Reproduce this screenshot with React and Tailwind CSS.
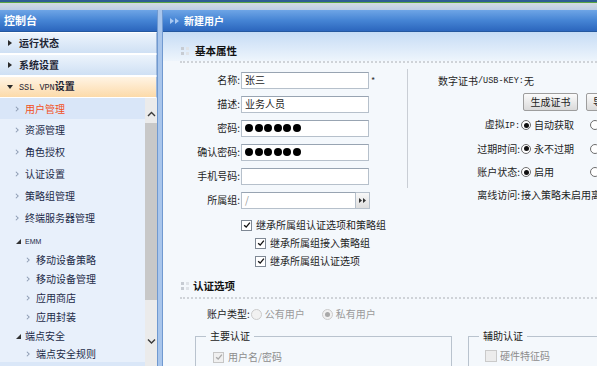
import React from "react";

const mono = "font-['Liberation_Mono',monospace]";

function Chevron({ dir = "right", className = "" }) {
  const d = {
    right: "M1 1 L4 4 L1 7",
    up: "M1 5 L4.5 1.5 L8 5",
    down: "M1 1.5 L4.5 5 L8 1.5",
  }[dir];
  const box = dir === "right" ? "0 0 5 8" : "0 0 9 6";
  return (
    <svg viewBox={box} className={className}>
      <path d={d} fill="none" stroke="currentColor" strokeWidth="1.4" />
    </svg>
  );
}

function Check({ checked, disabled, big }) {
  const box = disabled
    ? big
      ? "w-[12px] h-[12px] border border-[#cacaca] bg-[#ececec] flex items-center justify-center shrink-0"
      : "w-[11px] h-[11px] border border-[#c6c6c6] bg-[#f0f0f0] flex items-center justify-center shrink-0"
    : "w-[11px] h-[11px] border border-[#7e8894] bg-white flex items-center justify-center shrink-0";
  return (
    <span className={box}>
      {checked && (
        <svg viewBox="0 0 10 10" className="w-[8px] h-[8px]">
          <path d="M1.4 5.2 L4 7.6 L8.6 2" fill="none" stroke={disabled ? "#a9a9a9" : "#141414"} strokeWidth="1.7" />
        </svg>
      )}
    </span>
  );
}

function Radio({ checked, disabled }) {
  return (
    <span
      className={
        disabled
          ? "w-[11px] h-[11px] rounded-full border border-[#cbcbcb] bg-[#f1f1f1] flex items-center justify-center shrink-0"
          : "w-[10px] h-[10px] rounded-full border border-[#6d6d6d] bg-white flex items-center justify-center shrink-0"
      }
    >
      {checked && <span className={disabled ? "w-[5px] h-[5px] rounded-full bg-[#a8a8a8]" : "w-[5px] h-[5px] rounded-full bg-[#111]"} />}
    </span>
  );
}

function Field({ label, children, star, h = "h-[24px]" }) {
  return (
    <div className={`flex items-center ${h}`}>
      <span className="w-[77px] shrink-0 text-right whitespace-nowrap">{label}</span>
      {children}
      {star && <span className="ml-[2px] text-[9px] text-[#333]">*</span>}
    </div>
  );
}

function Input({ children, className = "w-[128px] ml-[1px]" }) {
  return (
    <div className={`h-[17px] shrink-0 border border-[#b6c0cb] border-t-[#98a4b2] bg-white flex items-center px-[3px] ${className}`}>
      {children}
    </div>
  );
}

function Dots() {
  return (
    <div className="flex gap-[1.5px]">
      {[0, 1, 2, 3, 4, 5].map((i) => (
        <span key={i} className="w-[8px] h-[8px] rounded-full bg-black" />
      ))}
    </div>
  );
}

function Grip() {
  return (
    <div className="grid grid-cols-2 gap-[2px] w-[8px]">
      <span className="w-[3px] h-[3px] bg-[#c7ccd3]" />
      <span className="w-[3px] h-[3px] bg-[#dfe3e8]" />
      <span className="w-[3px] h-[3px] bg-[#c7ccd3]" />
      <span className="w-[3px] h-[3px] bg-[#dfe3e8]" />
    </div>
  );
}

function TopItem({ children, open }) {
  return (
    <div
      className={
        open
          ? "h-[22px] flex items-center pl-[7px] bg-gradient-to-b from-[#fff4e4] to-[#fcdaa9] border-t border-white border-b border-[#e3bd86] border-r border-r-[#9fb9dc]"
          : "h-[22px] flex items-center pl-[8px] bg-gradient-to-b from-[#edf4fc] to-[#cfe0f4] border-t border-white border-b border-[#9ebadc] border-r border-r-[#9fb9dc]"
      }
    >
      {open ? (
        <svg viewBox="0 0 6 4" className="w-[6px] h-[4px] text-[#2a2a2a]">
          <path d="M0 0 H6 L3 4 Z" fill="currentColor" />
        </svg>
      ) : (
        <svg viewBox="0 0 4 6" className="w-[4px] h-[6px] text-[#2a2a2a]">
          <path d="M0 0 V6 L4 3 Z" fill="currentColor" />
        </svg>
      )}
      <span className={open ? "ml-[6px] font-semibold text-[#1d2433] whitespace-nowrap" : "ml-[7px] font-semibold text-[#1d2433] whitespace-nowrap"}>
        {children}
      </span>
    </div>
  );
}

function SubItem({ children, level = 1, h = "h-[22px]", active }) {
  return (
    <div className={`${h} flex items-center ${level === 2 ? "pl-[26px]" : "pl-[15px]"} ${active ? "bg-[#d9e6f8]" : ""}`}>
      <Chevron className="w-[4px] h-[6px] text-[#8c9bb2]" />
      <span className={active ? "ml-[6px] text-[#f2511c] whitespace-nowrap" : "ml-[6px] text-[#1c2a48] whitespace-nowrap"}>{children}</span>
    </div>
  );
}

function Group({ children, h, small }) {
  return (
    <div className={`${h} flex items-center pl-[16px]`}>
      <svg viewBox="0 0 5 5" className="w-[5px] h-[5px] text-[#333]">
        <path d="M5 0 V5 H0 Z" fill="currentColor" />
      </svg>
      <span className={small ? "ml-[4px] text-[7px] font-['Liberation_Sans',sans-serif] text-[#1c2a48]" : "ml-[4px] text-[#1c2a48] whitespace-nowrap"}>
        {children}
      </span>
    </div>
  );
}

function Sidebar() {
  return (
    <div className="w-[157px] shrink-0 flex flex-col">
      <div className="h-[22px] shrink-0 flex items-center pl-[4px] bg-gradient-to-b from-[#6ea5e6] via-[#4584d4] to-[#2c66bd] border-b border-[#24589f]">
        <span className="text-[11px] font-bold text-white">控制台</span>
      </div>
      <TopItem>运行状态</TopItem>
      <TopItem>系统设置</TopItem>
      <TopItem open>
        <span className={`${mono} text-[8.5px] font-normal`}>SSL VPN</span>设置
      </TopItem>
      <div className="flex-1 min-h-0 flex bg-[#e8f0fb]">
        <div className="flex-1 overflow-hidden">
          <SubItem h="h-[21px]" active>用户管理</SubItem>
          <SubItem>资源管理</SubItem>
          <SubItem>角色授权</SubItem>
          <SubItem>认证设置</SubItem>
          <SubItem>策略组管理</SubItem>
          <SubItem>终端服务器管理</SubItem>
          <div className="h-[4px]" />
          <Group h="h-[17px]" small>EMM</Group>
          <SubItem level={2} h="h-[19px]">移动设备策略</SubItem>
          <SubItem level={2} h="h-[19px]">移动设备管理</SubItem>
          <SubItem level={2} h="h-[19px]">应用商店</SubItem>
          <SubItem level={2} h="h-[19px]">应用封装</SubItem>
          <Group h="h-[20px]">端点安全</Group>
          <SubItem level={2} h="h-[16px]">端点安全规则</SubItem>
          <div className="h-[14px] flex items-end pl-[16px] bg-[#dae7f8] overflow-hidden">
            <svg viewBox="0 0 5 5" className="w-[5px] h-[5px] shrink-0 mb-[-4px] text-[#333]">
              <path d="M5 0 V5 H0 Z" fill="currentColor" />
            </svg>
            <span className="ml-[4px] mb-[-6px] text-[#1c2a48]">设置</span>
          </div>
        </div>
        <div className="w-[12px] shrink-0 flex flex-col bg-[#ebebeb]">
          <div className="h-[25px] flex items-center justify-center pt-[7px] text-[#3a3a3a]">
            <Chevron dir="up" className="w-[9px] h-[6px]" />
          </div>
          <div className="h-[177px] bg-[#c8c8c8]" />
          <div className="flex-1" />
          <div className="h-[16px] flex items-center justify-center text-[#3a3a3a]">
            <Chevron dir="down" className="w-[9px] h-[6px]" />
          </div>
          <div className="h-[17px]" />
        </div>
      </div>
    </div>
  );
}

function RadioRow({ label, first, h }) {
  return (
    <div className={`${h} flex items-center`}>
      <span className="w-[112px] shrink-0 text-right">{label}</span>
      <span className="ml-[1px] shrink-0"><Radio checked /></span>
      <span className="ml-[3px] w-[56px] shrink-0">{first}</span>
      <Radio />
    </div>
  );
}

function RightColumn() {
  return (
    <div className="flex-1 min-w-0 pt-[6px] whitespace-nowrap">
      <div className="border-l border-[#c9ced5] pb-[4px]">
        <div className="h-[24px] flex items-center pl-[30px]">
          数字证书<span className={`${mono} text-[8.5px]`}>/USB-KEY:</span>无
        </div>
        <div className="h-[18px] flex items-center pl-[115px] gap-[8px]">
          <div className="w-[55px] h-[18px] shrink-0 border border-[#9d9d9d] rounded-[2px] bg-gradient-to-b from-[#fbfbfb] to-[#dadada] flex items-center justify-center">
            生成证书
          </div>
          <div className="w-[55px] h-[18px] shrink-0 border border-[#9d9d9d] rounded-[2px] bg-gradient-to-b from-[#fbfbfb] to-[#dadada] flex items-center pl-[6px]">
            导入证书
          </div>
        </div>
        <div className="mt-[2px]">
          <RadioRow
            h="h-[24px]"
            label={<>虚拟<span className={`${mono} text-[8.5px]`}>IP:</span></>}
            first="自动获取"
          />
        </div>
        <RadioRow h="h-[23px]" label="过期时间:" first="永不过期" />
        <RadioRow h="h-[24px]" label="账户状态:" first="启用" />
      </div>
      <div className="h-[14px] flex items-center">
        <span className="w-[113px] shrink-0 text-right">离线访问:</span>
        <span className="ml-[1px] shrink-0">接入策略未启用离线访问</span>
      </div>
    </div>
  );
}

function Content() {
  return (
    <div className="flex-1 min-w-0 flex flex-col overflow-hidden">
      <div className="h-[22px] shrink-0 flex items-center pl-[7px] bg-gradient-to-b from-[#6ea5e6] via-[#4584d4] to-[#2c66bd] border-b border-[#24589f]">
        <svg viewBox="0 0 9 6" className="w-[9px] h-[6px] text-[#a9c9f2]">
          <path d="M0 0 L4 3 L0 6 Z M5 0 L9 3 L5 6 Z" fill="currentColor" />
        </svg>
        <span className="ml-[5px] font-bold text-white">新建用户</span>
      </div>
      <div className="h-[29px] shrink-0 bg-gradient-to-b from-[#c6dcf5] to-[#eef5fc] flex items-center pt-[9px] pl-[18px]">
        <Grip />
        <span className="ml-[6px] font-bold text-[10.5px] text-[#111]">基本属性</span>
      </div>
      <div className="ml-[17px] border-t-2 border-dotted border-[#cfd3d8]" />

      <div className="flex">
        <div className="w-[244px] shrink-0 pt-[5px]">
          <Field label="名称:" star>
            <Input>张三</Input>
          </Field>
          <Field label="描述:">
            <Input>业务人员</Input>
          </Field>
          <Field label="密码:">
            <Input><Dots /></Input>
          </Field>
          <Field label="确认密码:">
            <Input><Dots /></Input>
          </Field>
          <Field label="手机号码:">
            <Input />
          </Field>
          <Field label="所属组:">
            <Input className="w-[115px] ml-[1px]">
              <span className="text-[#9a9a9a]">/</span>
            </Input>
            <div className="w-[14px] h-[17px] shrink-0 border border-l-0 border-[#b6c0cb] bg-gradient-to-b from-[#f8f8f8] to-[#dedede] flex items-center justify-center">
              <svg viewBox="0 0 7 5" className="w-[7px] h-[5px] text-[#333]">
                <path d="M0 0 L3 2.5 L0 5 Z M4 0 L7 2.5 L4 5 Z" fill="currentColor" />
              </svg>
            </div>
          </Field>
          <div className="mt-[4px] h-[18px] flex items-center pl-[78px] whitespace-nowrap">
            <Check checked />
            <span className="ml-[4px]">继承所属组认证选项和策略组</span>
          </div>
          <div className="h-[18px] flex items-center pl-[92px] whitespace-nowrap">
            <Check checked />
            <span className="ml-[4px]">继承所属组接入策略组</span>
          </div>
          <div className="h-[18px] flex items-center pl-[92px] whitespace-nowrap">
            <Check checked />
            <span className="ml-[4px]">继承所属组认证选项</span>
          </div>
        </div>
        <RightColumn />
      </div>

      <div className="mt-[6px] h-[20px] shrink-0 flex items-center pl-[18px]">
        <Grip />
        <span className="ml-[4px] font-bold text-[10.5px] text-[#111]">认证选项</span>
      </div>
      <div className="mt-[1px] ml-[17px] border-t-2 border-dotted border-[#cfd3d8]" />

      <div className="mt-[5px] h-[20px] shrink-0 flex items-center pl-[44px] whitespace-nowrap">
        <span>账户类型:</span>
        <span className="ml-[1px]"><Radio disabled /></span>
        <span className="ml-[3px] text-[#9a9a9a] w-[57px]">公有用户</span>
        <Radio disabled checked />
        <span className="ml-[3px] text-[#9a9a9a]">私有用户</span>
      </div>

      <div className="mt-[7px] flex items-start whitespace-nowrap">
        <fieldset className="ml-[32px] w-[257px] h-[60px] shrink-0 border border-[#b9c3ce]">
          <legend className="ml-[10px] px-[4px] leading-[10px] text-[#1a1a1a]">主要认证</legend>
          <div className="mt-[9px] h-[14px] flex items-center pl-[17px]">
            <Check checked disabled />
            <span className="ml-[4px] text-[#8d8d8d]">用户名/密码</span>
          </div>
        </fieldset>
        <fieldset className="ml-[16px] w-[200px] h-[60px] shrink-0 border border-[#b9c3ce]">
          <legend className="ml-[10px] px-[4px] leading-[10px] text-[#1a1a1a]">辅助认证</legend>
          <div className="mt-[8px] h-[14px] flex items-center pl-[16px]">
            <Check disabled big />
            <span className="ml-[3px] text-[#8d8d8d]">硬件特征码</span>
          </div>
        </fieldset>
      </div>
    </div>
  );
}

export default function App() {
  return (
    <div className="w-[597px] h-[366px] overflow-hidden flex flex-col bg-[#f4f8fc] font-['Noto_Sans_CJK_SC',sans-serif] text-[10px] leading-none text-[#1e1e1e]">
      <div className="h-[10px] shrink-0 flex flex-col">
        <div className="h-[2px] bg-[#2c5d92]" />
        <div className="h-[1px] bg-[#5ba544]" />
        <div className="flex-1 bg-gradient-to-b from-[#d3dbe3] to-[#bacce4]" />
      </div>
      <div className="flex flex-1 min-h-0">
        <Sidebar />
        <div className="w-[6px] shrink-0 bg-[#a9c6ec] border-x border-[#7099d0]" />
        <Content />
      </div>
    </div>
  );
}
